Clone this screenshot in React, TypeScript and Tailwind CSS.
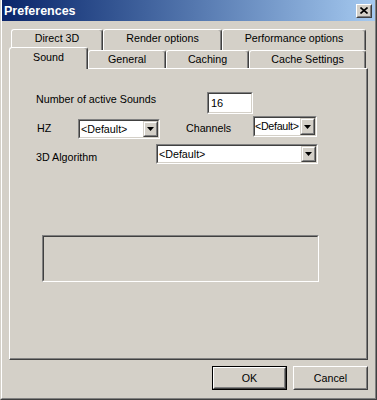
import React from "react";

const Raised = ({ className = "", children }: { className?: string; children?: React.ReactNode }) => (
  <div className={`border border-t-white border-l-white border-r-[#404040] border-b-[#404040] ${className}`}>
    <div className="w-full h-full border border-t-[#d4d0c8] border-l-[#d4d0c8] border-r-[#808080] border-b-[#808080] flex items-center justify-center">
      {children}
    </div>
  </div>
);

const Sunken = ({ className = "", children }: { className?: string; children?: React.ReactNode }) => (
  <div className={`border border-t-[#808080] border-l-[#808080] border-r-white border-b-white ${className}`}>
    <div className="w-full h-full border border-t-[#404040] border-l-[#404040] border-r-[#d4d0c8] border-b-[#d4d0c8] bg-white flex items-center">
      {children}
    </div>
  </div>
);

const Combo = ({ className = "", tight = false }: { className?: string; tight?: boolean }) => (
  <Sunken className={className}>
    <div
      className={`flex-1 min-w-0 leading-[13px] whitespace-nowrap overflow-visible ${
        tight ? "tracking-[-0.3px]" : "pl-[1px]"
      }`}
    >
      &lt;Default&gt;
    </div>
    <div className="w-[15px] h-full shrink-0 border border-t-[#d4d0c8] border-l-[#d4d0c8] border-r-[#404040] border-b-[#404040]">
      <div className="w-full h-full border border-t-white border-l-white border-r-[#808080] border-b-[#808080] bg-[#d4d0c8] flex items-center justify-center">
        <svg width="7" height="4" viewBox="0 0 7 4">
          <path d="M0 0H7L3.5 4Z" fill="#000" />
        </svg>
      </div>
    </div>
  </Sunken>
);

const Tab = ({ label, w, selected = false, h }: { label: string; w: string; selected?: boolean; h: string }) => (
  <div
    className={`${w} ${h} shrink-0 bg-[#d4d0c8] border-l border-t border-r border-l-white border-t-white border-r-[#404040] rounded-t-[3px] shadow-[inset_-1px_0_0_#808080] flex justify-center ${
      selected ? "relative z-20 pt-[3px]" : "pt-[2px]"
    }`}
  >
    <span className="leading-[13px]">{label}</span>
  </div>
);

export default function App() {
  return (
    <div className="w-[377px] h-[400px] bg-[#d4d0c8] font-['Liberation_Sans',Arial,sans-serif] text-[10.7px] text-black flex flex-col border-l border-r border-b border-l-[#d4d0c8] border-r-[#404040] border-b-[#404040]">
      <div className="flex-1 flex flex-col border-l border-r border-b border-l-white border-r-[#808080] border-b-[#808080]">
        {/* Title bar */}
        <div className="h-[21px] bg-gradient-to-r from-[#0a246a] to-[#a6caf0] flex items-center pl-[2px] pr-[3px]">
          <span className="text-white font-bold text-[12.5px] leading-[14px] flex-1">Preferences</span>
          <Raised className="w-[16px] h-[14px] bg-[#d4d0c8]">
            <svg width="8" height="7" viewBox="0 0 8 7">
              <path d="M0.5 0.5L7.5 6.5M7.5 0.5L0.5 6.5" stroke="#000" strokeWidth="1.6" />
            </svg>
          </Raised>
        </div>

        {/* Tabs + panel */}
        <div className="pl-[7px] pt-[8px] flex flex-col w-[366px]">
          <div className="flex h-[21px] ml-[2px]">
            <Tab label="Direct 3D" w="w-[92px]" h="h-[21px]" />
            <Tab label="Render options" w="w-[119px]" h="h-[21px]" />
            <Tab label="Performance options" w="w-[144px]" h="h-[21px]" />
          </div>
          <div className="flex items-end h-[22px] mt-[-3px] relative z-10">
            <Tab label="Sound" w="w-[79px]" h="h-[22px]" selected />
            <div className="mb-[1px] flex">
              <Tab label="General" w="w-[78px]" h="h-[18px]" />
              <Tab label="Caching" w="w-[83px]" h="h-[18px]" />
              <Tab label="Cache Settings" w="w-[117px]" h="h-[18px]" />
            </div>
          </div>
          <div className="mt-[-1px] w-[359px] h-[292px] border-l border-t border-r border-b border-l-white border-t-white border-r-[#404040] border-b-[#404040] shadow-[inset_-1px_-1px_0_#808080] flex flex-col pl-[26px] pt-[23px]">
            <div className="flex items-start h-[22px]">
              <div className="w-[171px] leading-[13px] mt-[1px]">Number of active Sounds</div>
              <Sunken className="w-[46px] h-[22px]">
                <span className="pl-[2px] leading-[13px] text-[11px]">16</span>
              </Sunken>
            </div>
            <div className="flex items-start h-[23px] mt-[2px]">
              <div className="ml-[1px] w-[41px] leading-[13px] mt-[6px]">HZ</div>
              <Combo className="w-[82px] h-[20px] mt-[3px]" />
              <div className="ml-[26px] w-[67px] leading-[13px] mt-[6px]">Channels</div>
              <Combo className="w-[64px] h-[21px]" tight />
            </div>
            <div className="flex items-start h-[20px] mt-[5px]">
              <div className="w-[120px] leading-[13px] mt-[7px]">3D Algorithm</div>
              <Combo className="w-[162px] h-[20px]" />
            </div>
            <div className="ml-[6px] mt-[71px] w-[277px] h-[47px] border border-t-[#808080] border-l-[#808080] border-r-white border-b-white">
              <div className="w-full h-full border border-t-[#404040] border-l-[#404040] border-r-[#d4d0c8] border-b-[#d4d0c8]" />
            </div>
          </div>
        </div>

        {/* Buttons */}
        <div className="flex justify-end gap-[6px] pr-[7px] mt-[6px]">
          <div className="w-[75px] h-[24px] border border-black">
            <Raised className="w-full h-full">
              <span className="leading-[13px]">OK</span>
            </Raised>
          </div>
          <Raised className="w-[75px] h-[24px]">
            <span className="leading-[13px]">Cancel</span>
          </Raised>
        </div>
      </div>
    </div>
  );
}
